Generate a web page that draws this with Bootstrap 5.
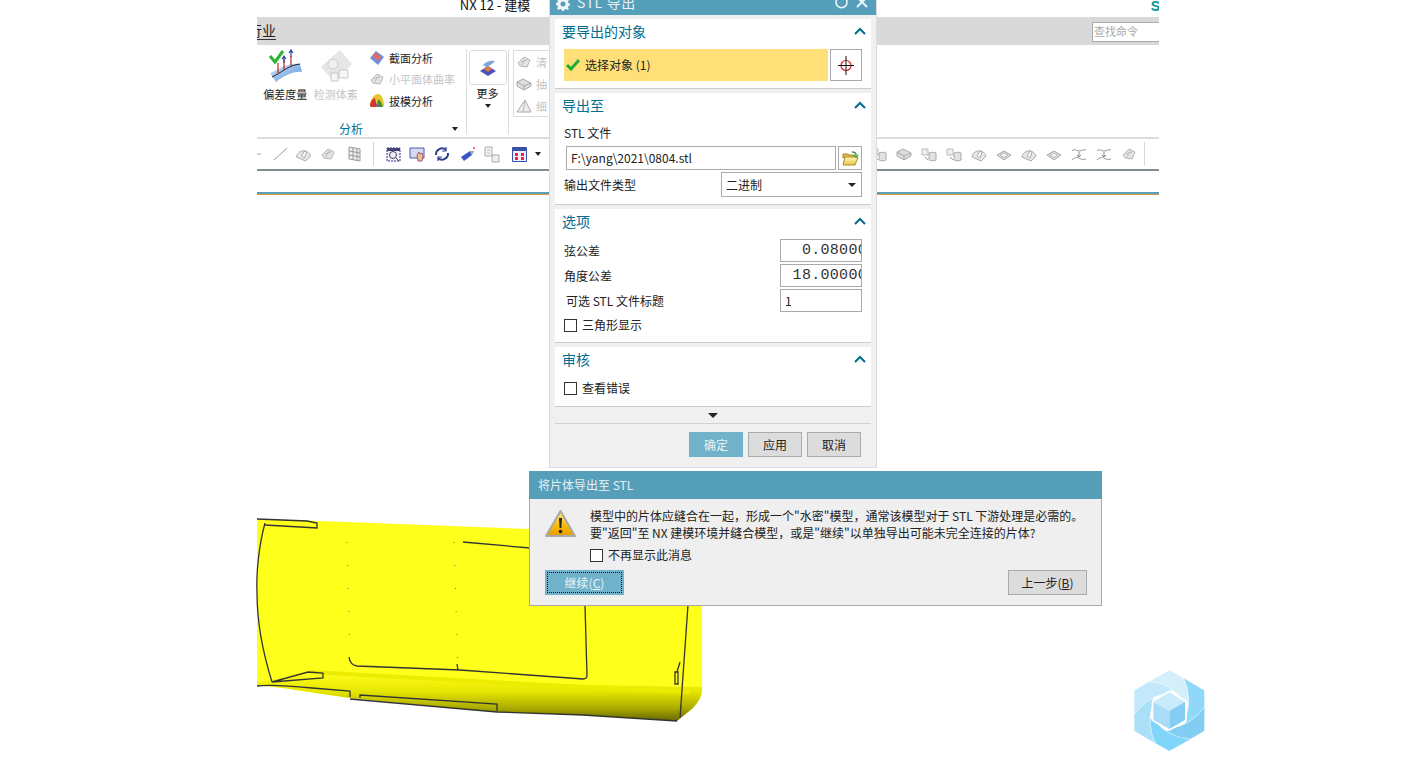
<!DOCTYPE html>
<html lang="zh-CN">
<head>
<meta charset="UTF-8">
<meta name="viewport" content="width=device-width, initial-scale=1.0">
<link href="https://cdn.jsdelivr.net/npm/bootstrap@5.3.2/dist/css/bootstrap.min.css" rel="stylesheet">
<script src="https://cdn.jsdelivr.net/npm/bootstrap@5.3.2/dist/js/bootstrap.bundle.min.js"></script>
<title>STL 导出</title>
<style>
html, body { height: 100%; }
body { background: #fff; overflow: hidden; font: 12px/16px "Noto Sans CJK SC", "Liberation Sans", sans-serif; color: #222; }
svg { display: block; flex: none; }

/* windows on the desktop */
.app-win { position: absolute; left: 257px; top: 0; width: 902px; height: 765px; overflow: hidden; }
.stl-dlg { position: absolute; left: 549px; top: 0; width: 328px; height: 468px; background: #f0f0f0; border: 1px solid #dcdcdc; border-top: 0; }
.msg-dlg { position: absolute; left: 529px; top: 471px; width: 573px; height: 135px; background: #efefef; border: 1px solid #a9a9a9; border-top: 0; }
.wm-logo { position: absolute; left: 1120px; top: 660px; }
.car-shape { position: absolute; left: 0; top: 505px; }

/* app window */
.app-title { height: 17px; overflow: hidden; text-align: center; padding-right: 426px; font-size: 13px; line-height: 12px; color: #111; }
.app-title span { display: block; margin-top: -1px; }
.app-brand { position: absolute; right: -1px; top: 0; color: #009999; font: bold 14px/12px "Liberation Sans", sans-serif; }
.tab-strip { height: 28px; background: #d9d9d9; font-size: 14px; }
.tab-name { margin: 5px 0 0 -9px; border-bottom: 1px solid #333; line-height: 16px; height: 18px; }
.find-box { width: 67px; height: 20px; margin-top: 5px; background: #fff; border: 1px solid #aaa; border-right: 0; color: #aaa; font-size: 11px; line-height: 17px; padding-left: 1px; }
.ribbon-bar { height: 94px; border-bottom: 2px solid #dcdcdc; font-size: 11px; }
.rb-group { margin-top: 4px; height: 85px; border-right: 1px solid #dcdcdc; position: relative; }
.rb-analysis { width: 210px; padding-left: 3px; }
.rb-more { width: 42px; }
.big-cmd { width: 52px; text-align: center; line-height: 14px; }
.big-cmd svg { margin: 0 auto 4px; }
.small-cmds { width: 100px; margin: -2px 0 0 8px; }
.small-cmd { height: 21.5px; gap: 4px; }
.is-off { color: #c4c4c4; }
.rb-label { position: absolute; left: 82px; top: 72px; color: #00708f; font-size: 12px; line-height: 16px; }
.rb-arrow { width: 0; height: 0; border: 3px solid transparent; border-top: 4px solid #222; border-bottom: 0; }
.rb-arrow-end { position: absolute; right: 8px; top: 78px; }
.more-box { width: 38px; height: 35px; margin: 1px 0 0 2px; border: 1px solid #dcdcdc; border-radius: 3px; }
.more-name { margin-top: 1px; line-height: 14px; }
.ghost-box { width: 60px; height: 67px; margin: 5px 0 0 4px; border: 1px solid #ddd; padding: 0 2px; color: #c4c4c4; }
.ghost-row { height: 22px; gap: 4px; }
.tool-row { height: 32px; border-bottom: 2px solid #7f8d90; gap: 8px; }
.tool-sep { width: 1px; height: 24px; background: #d8d8d8; }
.tool-hole { width: 314px; }
.tool-rhs { gap: 9px; }
.tool-rhs .tool-sep { margin-left: -2px; }
.rule-band { height: 3px; margin-top: 21px; background: linear-gradient(#58a1bc 0 2px, #e59a45 2px); }

/* STL dialog */
.dlg-head { height: 15px; background: #559fba; color: #e8f1f4; overflow: hidden; padding: 0 8px 0 6px; font-size: 14px; letter-spacing: .6px; }
.dlg-head span { margin: -6px 0 0 7px; line-height: 16px; }
.head-gear { margin-top: -3px; }
.head-redo { margin-top: -4px; }
.head-close { margin-top: -3px; }
.panel-stack { padding: 4px 5px 0 5px; gap: 4px; }
.fold-panel { background: #fff; border-bottom: 1px solid #cdcdcd; padding: 0 9px; }
.fold-head { height: 30px; margin: 0 -4px 0 -2px; color: #006c8f; font-size: 14px; line-height: 20px; padding-bottom: 6px; }
.pick-row { height: 32px; gap: 2px; margin-bottom: 7px; }
.pick-bar { background: #ffdf78; gap: 5px; padding-left: 2px; }
.pick-btn { width: 32px; background: #fff; border: 1px solid #aaa; }
.field-row { height: 23px; }
.file-label { height: 23px; line-height: 20px; }
.file-row { height: 24px; margin-left: 2px; gap: 2px; }
.file-box { height: 23px; }
.file-btn { width: 24px; }
.type-row { height: 25px; margin: 2px 0 7px; }
.type-box { width: 141px; }
.type-tri { border-width: 4px 4px 0; margin-right: 1px; }
.text-box { border: 1px solid #aaa; background: #fff; height: 100%; padding: 0 4px; overflow: hidden; white-space: nowrap; line-height: 21px; }
.short-box { width: 82px; }
.num-box { width: 82px; text-align: right; font: 15px/21px "Liberation Mono", monospace; letter-spacing: .3px; padding: 0; color: #333; }
.num-box span { display: inline-block; margin-right: -6px; }
.opt-rows { gap: 2px; }
.opt-indent { margin-left: 2px; }
.tick-box { width: 13px; height: 13px; border: 1px solid #333; background: #fff; flex: none; }
.tick-row { gap: 5px; height: 22px; }
.tick-tri { margin: 2px 0 6px; }
.tick-last { margin-bottom: 7px; }
.more-row { height: 17px; border-bottom: 1px solid #d2d2d2; margin: 0 5px; padding-top: 1px; }
.down-tri { width: 0; height: 0; border: 5px solid transparent; border-top: 5px solid #222; border-bottom: 0; }
.dlg-foot { gap: 5px; padding: 8px 15px 0 0; }
.dlg-btn.btn { height: 25px; width: 54px; padding: 0; border-radius: 0; background: #dcdcdc; border: 1px solid #aaa; color: #222; font-size: 12px; line-height: 22px; }
.dlg-btn.btn-go { background: #6fb2ca; border-color: #6fb2ca; color: #e8f4f8; }

/* message dialog */
.msg-head { height: 28px; margin: 0 -1px; background: #559fba; color: #e8f1f4; padding-left: 9px; line-height: 28px; }
.msg-body { padding: 8px 0 0 15px; }
.msg-warn { margin-top: 2px; }
.msg-text { margin-left: 14px; }
.msg-copy { line-height: 17px; }
.msg-tick { margin-top: 3px; }
.msg-foot { padding: 0 14px 0 15px; margin-top: 4px; }
.msg-btn.btn { width: 79px; height: 25px; padding: 0; border-radius: 0; background: #dcdcdc; border: 1px solid #aaa; color: #222; font-size: 12px; line-height: 23px; }
.msg-btn.btn-go { background: #6fb2ca; border: 2px solid #6fb2ca; color: #e8f4f8; line-height: 19px; outline: 1px dotted #111; outline-offset: -3px; }
</style>
</head>
<body>

<svg width="0" height="0" class="position-absolute">
  <defs>
    <linearGradient id="surfBlue" x1="0" y1="0" x2="1" y2="1"><stop offset="0" stop-color="#d8e8f8"/><stop offset="1" stop-color="#4f8fdc"/></linearGradient>
    <linearGradient id="warnGold" x1="0" y1="0" x2="0" y2="1"><stop offset="0" stop-color="#ffe98a"/><stop offset=".6" stop-color="#f7b900"/><stop offset="1" stop-color="#e79a00"/></linearGradient>
    <linearGradient id="carShade" x1="0" y1="0" x2="0" y2="1"><stop offset="0" stop-color="#ffff1c"/><stop offset=".4" stop-color="#e6e600"/><stop offset=".75" stop-color="#a8a800"/><stop offset="1" stop-color="#666600"/></linearGradient>
    <linearGradient id="folderFill" x1="0" y1="0" x2="0" y2="1"><stop offset="0" stop-color="#fff6b8"/><stop offset="1" stop-color="#e9c548"/></linearGradient>
    <path id="petal" d="M84 66 148 30l44 25q22 37 14 75l-14-8Q150 72 84 66z"/>
    <symbol id="i-surf" viewBox="0 0 16 16"><path d="M2 9 8 3l6 3-3 7-7-1z" fill="#e4e4e4" stroke="#b5b5b5"/><path d="M5 8l6-2M6 11l3-6" stroke="#bbb"/></symbol>
    <symbol id="i-cyl" viewBox="0 0 16 16"><path d="M1 3h6v6H1z" fill="#eee" stroke="#bbb"/><path d="M8 7c2-1 6-1 7 0v7c-1 1-5 1-7 0z" fill="#e2e2e2" stroke="#aaa"/><path d="M4 11l3 3" stroke="#999"/></symbol>
    <symbol id="i-book" viewBox="0 0 16 16"><path d="M1 9l7-4 7 4-7 5z" fill="#ddd" stroke="#aaa"/><path d="M4 9l4-2 4 2-4 2.500z" fill="#f3f3f3" stroke="#bbb"/></symbol>
    <symbol id="i-dome" viewBox="0 0 16 16"><path d="M1 11C2 4 12 2 15 10l-5 5z" fill="#e6e6e6" stroke="#aaa"/><path d="M6 10l3-5 2 1-2 6z" fill="#fff" stroke="#aaa"/></symbol>
    <symbol id="i-wave" viewBox="0 0 16 16" fill="none" stroke="#999"><path d="M1 5c3-3 4 0 7 0s4-2 7-1M1 14c3-3 6-3 7-2s4 2 7 1"/><path d="M8 6v5m-2-2 2 2 2-2" stroke="#888"/></symbol>
    <symbol id="i-box" viewBox="0 0 16 16"><path d="M1 6l6-3 8 4v3l-7 4-7-4z" fill="#ddd" stroke="#aaa"/><path d="M1 6l7 4 7-3M8 10v4" fill="none" stroke="#aaa"/></symbol>
    <symbol id="i-chev" viewBox="0 0 12 8"><path d="M1 7l5-5 5 5" fill="none" stroke="#006c8f" stroke-width="2"/></symbol>
  </defs>
</svg>

<div class="app-win">
  <div class="app-title"><span>NX 12 - 建模</span></div>
  <span class="app-brand">S</span>
  <div class="tab-strip d-flex justify-content-between">
    <span class="tab-name">行业</span>
    <div class="find-box">查找命令</div>
  </div>

  <div class="ribbon-bar d-flex">
    <div class="rb-group rb-analysis d-flex">
      <div class="big-cmd">
        <svg width="36" height="34" viewBox="0 0 36 34">
          <path d="M3 24C12 20 22 13 33 15l2 8c-9-1-18 4-26 10z" fill="url(#surfBlue)"/>
          <path d="M5 28C14 24 22 16 33 15" fill="none" stroke="#222"/>
          <path d="M11 25V14M17 21V10M24 17V7" stroke="#c22" stroke-width="1.200"/>
          <path d="M17 14v-6m-2 2 2-3 2 3M24 8V2m-2 2 2-3 2 3" fill="none" stroke="#2547a8" stroke-width="1.200"/>
          <path d="M3 7l5 6L16 2" fill="none" stroke="#2cb52c" stroke-width="3"/>
        </svg>
        偏差度量
      </div>
      <div class="big-cmd is-off">
        <svg width="36" height="34" viewBox="0 0 36 34">
          <path d="M3 18 22 1l12 14-18 18z" fill="#e6e6e6"/>
          <circle cx="15" cy="15" r="5" fill="#f0f0f0" stroke="#ccc"/>
          <path d="M21 21h9v8h-9zM13 24h7v8h-7z" fill="#f6f6f6" stroke="#c8c8c8"/>
        </svg>
        检测体素
      </div>
      <div class="small-cmds">
        <div class="small-cmd d-flex align-items-center">
          <svg width="16" height="16" viewBox="0 0 16 16"><path d="M1 8l6-7 8 6-6 8z" fill="#6f8fdc"/><path d="M6 2l6 5-3 4-5-4z" fill="#e46a6a"/></svg>截面分析
        </div>
        <div class="small-cmd d-flex align-items-center is-off"><svg width="16" height="16"><use href="#i-surf"/></svg>小平面体曲率</div>
        <div class="small-cmd d-flex align-items-center">
          <svg width="16" height="16" viewBox="0 0 16 16"><path d="M1 13C1 6 5 1 9 1s6 6 6 12z" fill="#e8c62e"/><path d="M1 13c0-4 2-7 5-8l2 9H2z" fill="#d9362b"/><path d="M8 14l1-8 3 3 2 5z" fill="#3f8c3f"/><path d="M5 10l3 1-1 3z" fill="#7a3fb5"/></svg>拔模分析
        </div>
      </div>
      <span class="rb-label">分析</span>
      <span class="rb-arrow rb-arrow-end"></span>
    </div>
    <div class="rb-group rb-more">
      <div class="more-box d-flex align-items-center justify-content-center">
        <svg width="20" height="20" viewBox="0 0 20 20"><path d="M2 13l8-5 8 5-8 5z" fill="#4a52b8"/><path d="M6 11l4-3 4 3-4 3z" fill="#e07a3a"/><path d="M5 7c3-4 9-5 12-4-2 3-6 5-9 6z" fill="#7ba5dc"/></svg>
      </div>
      <div class="more-name text-center">更多</div>
      <span class="rb-arrow d-block mx-auto mt-1"></span>
    </div>
    <div class="ghost-box">
      <div class="ghost-row d-flex align-items-center"><svg width="16" height="16"><use href="#i-surf"/></svg>清</div>
      <div class="ghost-row d-flex align-items-center"><svg width="16" height="16"><use href="#i-box"/></svg>抽</div>
      <div class="ghost-row d-flex align-items-center"><svg width="16" height="16" viewBox="0 0 16 16"><path d="M1 14 9 2l6 12z" fill="#eee" stroke="#aaa"/><path d="M9 2 7 14" stroke="#bbb"/></svg>细</div>
    </div>
  </div>

  <div class="tool-row d-flex align-items-center">
    <svg width="4" height="16"><path d="M0 8h4" stroke="#aaa"/></svg>
    <svg class="ms-1" width="14" height="16"><path d="M1 14 14 2" stroke="#999"/></svg>
    <svg width="17" height="16"><use href="#i-dome"/></svg>
    <svg width="16" height="16"><use href="#i-surf"/></svg>
    <svg class="ms-1" width="13" height="16" viewBox="0 0 13 16"><path d="M1 1l11 2v12L1 13zM1 5l11 2M1 9l11 2M5 2v12M9 3v12" fill="#eee" stroke="#999"/></svg>
    <span class="tool-sep ms-1"></span>
    <svg class="ms-1" width="15" height="15" viewBox="0 0 15 15"><path d="M1 1h13v13H1z" fill="#eef" stroke="#338" stroke-dasharray="2 1"/><path d="M1 1h13v3H1z" fill="#447"/><circle cx="7" cy="8" r="3.500" fill="none" stroke="#444"/><path d="M10 11l3 3" stroke="#444"/></svg>
    <svg width="17" height="15" viewBox="0 0 17 15"><path d="M1 1h14v10H1z" fill="#d6dcef" stroke="#55a"/><path d="M8 8l2-3 1 2 2-1 1 3-1 5H9z" fill="#e8c28a" stroke="#a57"/></svg>
    <svg width="16" height="16" viewBox="0 0 16 16" fill="none" stroke="#33408c" stroke-width="2"><path d="M2 9a6 6 0 0 1 10-5M14 7a6 6 0 0 1-10 5"/><path d="M12 1v4H8M4 15v-4h4" stroke-width="1.200"/></svg>
    <svg width="18" height="16" viewBox="-2 0 18 16"><path d="M1 11l9-6 2 4-8 6z" fill="#3a55c4"/><path d="M10 5l2 4 2-4z" fill="#8aa"/><circle cx="14" cy="2" r="1" fill="#e33"/></svg>
    <svg width="16" height="17" viewBox="0 0 16 17"><path d="M1 1h7v9H1z" fill="#f2f2f2" stroke="#aaa"/><path d="M8 9h7v7H8z" fill="#eee" stroke="#aaa"/><path d="M3 4h3M3 7h3" stroke="#bbb"/></svg>
    <svg width="15" height="15" class="ms-1" viewBox="0 0 15 15"><path d="M.5.500h14v14H.5z" fill="#eef" stroke="#3650a8"/><path d="M1 1h13v3H1z" fill="#3650a8"/><path d="M3 6h3v3H3zM9 6h3v3H9zM3 10h3v3H3zM9 10h3v3H9z" fill="#e23"/></svg>
    <span class="rb-arrow"></span>
    <span class="tool-hole"></span>
    <div class="tool-rhs d-flex align-items-center">
      <svg width="16" height="16"><use href="#i-cyl"/></svg>
      <svg width="16" height="16"><use href="#i-box"/></svg>
      <svg width="16" height="16"><use href="#i-cyl"/></svg>
      <svg width="16" height="16"><use href="#i-cyl"/></svg>
      <svg width="16" height="16"><use href="#i-dome"/></svg>
      <svg width="16" height="16"><use href="#i-book"/></svg>
      <svg width="16" height="16"><use href="#i-dome"/></svg>
      <svg width="16" height="16"><use href="#i-book"/></svg>
      <svg width="16" height="16"><use href="#i-wave"/></svg>
      <svg width="16" height="16"><use href="#i-wave"/></svg>
      <svg width="16" height="16"><use href="#i-surf"/></svg>
      <span class="tool-sep"></span>
    </div>
  </div>
  <div class="rule-band"></div>
</div>

<svg class="car-shape" width="702" height="225" viewBox="0 505 702 225">
  <path d="M257 519l63 2 210 8 60 60 112 16v85q0 8-9 18l-16 13-94-6-86-3-147-14-67-10-26-3z" fill="#ffff1c"/>
  <path d="M300 672l60 3 230 10 112 2v3q0 8-9 18l-16 13-94-6-86-3-147-14-67-10-26-3v-3c20-4 35-4 43-6z" fill="url(#carShade)"/>
  <path d="M310 672l270 15 110 5" fill="none" stroke="#ecec00" stroke-width="4"/>
  <g fill="none" stroke="#333" stroke-width="1.300">
    <path d="M265 523c-6 22-9 50-8 70 0 30 6 60 15 89"/>
    <path d="M257 519l50 2 10 2v5l-52-3"/>
    <path d="M463 542l67 6"/>
    <path d="M585 606l2 69q0 4-4 4l-123-9-103-4q-7-1-8-9"/>
    <path d="M458 670l-1-6"/>
    <path d="M688 605l-8 113"/>
    <path d="M257 686c15-2 35 0 55 2l38 3v6M360 698l0-3 137 9v7"/>
    <path d="M350 699l147 13 86 3 94 6"/>
    <path d="M272 682l36-10 15 1v5l-51 4"/>
    <path d="M675 672h3v12h-3zM680 662l-3 10"/>
  </g>
  <g fill="none" stroke="#555" stroke-width=".8" stroke-dasharray="1 22"><path d="M347 542l3 115M454 542l4 128"/></g>
</svg>

<div class="stl-dlg d-flex flex-column">
  <div class="dlg-head d-flex align-items-start">
    <svg class="head-gear" width="14" height="14" viewBox="0 0 14 14"><path d="M6 0h2l.4 2 1.500.6L11.600 1.500 13 3l-1.100 1.700.6 1.500L14 6.500v2l-1.500.4-.6 1.500 1 1.600L11.500 13l-1.600-1-1.500.6L8 14H6l-.4-1.400-1.500-.6-1.600 1L1 11.500l1-1.600-.6-1.500L0 8V6l1.400-.4.600-1.500L1 2.500 2.500 1l1.600 1 1.500-.6z" fill="#eef5f8"/><circle cx="7" cy="7" r="2.500" fill="#559fba"/></svg>
    <span>STL 导出</span>
    <svg class="head-redo ms-auto" width="13" height="13" viewBox="0 0 13 13"><path d="M3 2a5.500 5.500 0 1 0 7 0" fill="none" stroke="#eef5f8" stroke-width="1.600"/><path d="M10 0v3h3" fill="none" stroke="#eef5f8" stroke-width="1.400"/></svg>
    <svg class="head-close ms-2" width="12" height="12" viewBox="0 0 12 12"><path d="M1 0l10 10M11 0 1 10" stroke="#eef5f8" stroke-width="2"/></svg>
  </div>

  <div class="panel-stack d-flex flex-column">
    <section class="fold-panel">
      <div class="fold-head d-flex justify-content-between align-items-center">要导出的对象 <svg width="12" height="8"><use href="#i-chev"/></svg></div>
      <div class="pick-row d-flex">
        <div class="pick-bar flex-grow-1 d-flex align-items-center">
          <svg width="14" height="12" viewBox="0 0 14 12"><path d="M1 6l4 4 8-9" fill="none" stroke="#1fae35" stroke-width="3"/></svg>
          选择对象 (1)
        </div>
        <div class="pick-btn d-flex align-items-center justify-content-center">
          <svg width="16" height="19" viewBox="0 0 16 19"><circle cx="8" cy="9.500" r="5" fill="none" stroke="#e02020" stroke-width="1.200"/><path d="M8 0v19M0 9.500h16" stroke="#111"/></svg>
        </div>
      </div>
    </section>

    <section class="fold-panel">
      <div class="fold-head d-flex justify-content-between align-items-center">导出至 <svg width="12" height="8"><use href="#i-chev"/></svg></div>
      <div class="file-label">STL 文件</div>
      <div class="file-row d-flex justify-content-between">
        <div class="text-box file-box flex-grow-1">F:\yang\2021\0804.stl</div>
        <div class="pick-btn file-btn d-flex align-items-center justify-content-center">
          <svg width="17" height="15" viewBox="0 0 17 15"><path d="M1 3h5l1 1h5v3H1z" fill="#d8b94a" stroke="#a88a2a"/><path d="M1 14l2-8h13l-3 8z" fill="url(#folderFill)" stroke="#b09030"/><path d="M10 1c3 0 4 1 4 3m-2 0 2 2 2-2" fill="none" stroke="#3a9a3a" stroke-width="1.500"/></svg>
        </div>
      </div>
      <div class="type-row d-flex justify-content-between align-items-center">
        <span>输出文件类型</span>
        <div class="text-box type-box d-flex justify-content-between align-items-center">二进制<span class="rb-arrow type-tri"></span></div>
      </div>
    </section>

    <section class="fold-panel">
      <div class="fold-head d-flex justify-content-between align-items-center">选项 <svg width="12" height="8"><use href="#i-chev"/></svg></div>
      <div class="opt-rows d-flex flex-column">
        <div class="field-row d-flex justify-content-between align-items-center"><span>弦公差</span><div class="text-box num-box"><span>0.08000</span></div></div>
        <div class="field-row d-flex justify-content-between align-items-center"><span>角度公差</span><div class="text-box num-box"><span>18.00000</span></div></div>
        <div class="field-row d-flex justify-content-between align-items-center"><span class="opt-indent">可选 STL 文件标题</span><div class="text-box short-box">1</div></div>
      </div>
      <div class="tick-row tick-tri d-flex align-items-center"><span class="tick-box"></span>三角形显示</div>
    </section>

    <section class="fold-panel">
      <div class="fold-head d-flex justify-content-between align-items-center">审核 <svg width="12" height="8"><use href="#i-chev"/></svg></div>
      <div class="tick-row tick-last d-flex align-items-center"><span class="tick-box"></span>查看错误</div>
    </section>
  </div>

  <div class="more-row d-flex align-items-center justify-content-center"><span class="down-tri"></span></div>
  <div class="dlg-foot d-flex justify-content-end">
    <button class="btn dlg-btn btn-go">确定</button>
    <button class="btn dlg-btn">应用</button>
    <button class="btn dlg-btn">取消</button>
  </div>
</div>

<div class="msg-dlg d-flex flex-column">
  <div class="msg-head">将片体导出至 STL</div>
  <div class="msg-body d-flex">
    <svg class="msg-warn" width="31" height="29" viewBox="0 0 31 29"><path d="M15.500 2 30 27H1z" fill="url(#warnGold)" stroke="#a9a9a9" stroke-width="2" stroke-linejoin="round"/><path d="M14 9h3l-.6 10h-1.800z" fill="#222"/><circle cx="15.500" cy="22.500" r="1.800" fill="#222"/></svg>
    <div class="msg-text">
      <div class="msg-copy">模型中的片体应缝合在一起，形成一个"水密"模型，通常该模型对于 STL 下游处理是必需的。<br>要"返回"至 NX 建模环境并缝合模型，或是"继续"以单独导出可能未完全连接的片体?</div>
      <div class="tick-row msg-tick d-flex align-items-center"><span class="tick-box"></span>不再显示此消息</div>
    </div>
  </div>
  <div class="msg-foot d-flex justify-content-between">
    <button class="btn msg-btn btn-go">继续(<u>C</u>)</button>
    <button class="btn msg-btn">上一步(<u>B</u>)</button>
  </div>
</div>

<svg class="wm-logo" width="100" height="100" viewBox="0 0 300 300">
  <g stroke="#fff" stroke-width="1.500">
    <use href="#petal" fill="#d4eefb"/>
    <use href="#petal" fill="#90d8f8" transform="rotate(60 148 152)"/>
    <use href="#petal" fill="#82cdf2" transform="rotate(120 148 152)"/>
    <use href="#petal" fill="#82d5fa" transform="rotate(180 148 152)"/>
    <use href="#petal" fill="#a9e0f8" transform="rotate(240 148 152)"/>
    <use href="#petal" fill="#c3e8fb" transform="rotate(300 148 152)"/>
  </g>
  <path d="M148 91 201 122V182L148 213 95 182V122z" fill="#fff"/>
  <path d="M148 97l47 28-47 28-48-28z" fill="#c8ecfc"/>
  <path d="M100 125l48 28v54l-48-27z" fill="#a9dcf7"/>
  <path d="M195 125v55l-47 27v-54z" fill="#84cdf3"/>
</svg>

</body>
</html>
